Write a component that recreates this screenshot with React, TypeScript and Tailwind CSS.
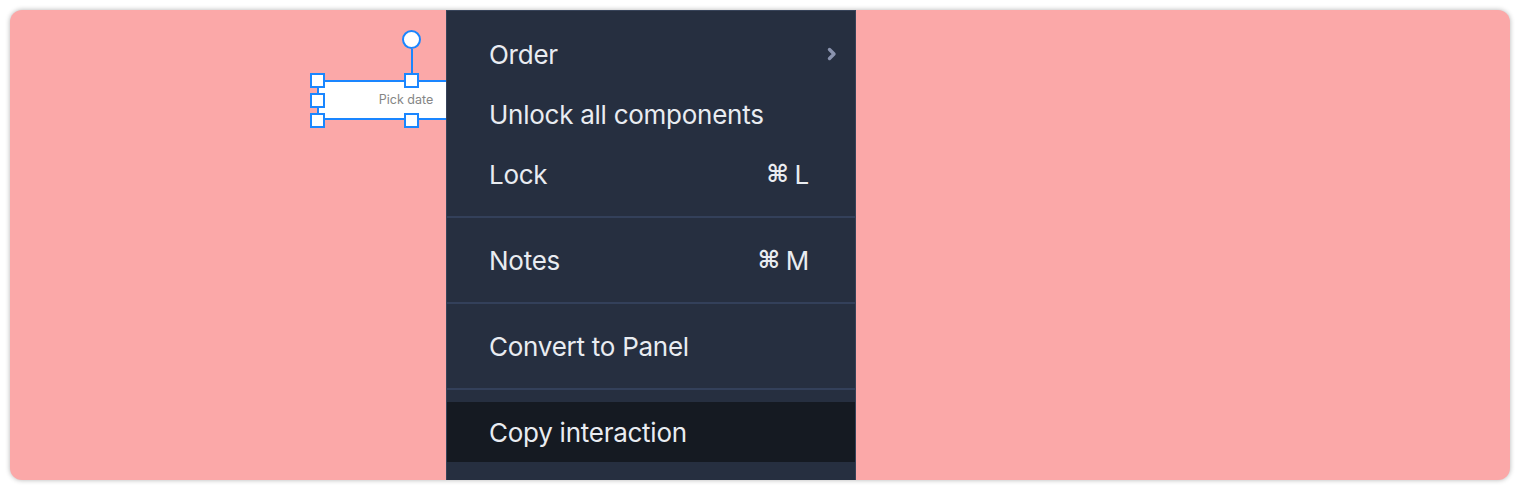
import { ReactNode } from "react";

const Handle = ({ className }: { className: string }) => (
  <div className={`absolute w-[15px] h-[15px] bg-white border-2 border-[#1a86ff] ${className}`} />
);

const Item = ({ label, right, active }: { label: string; right?: ReactNode; active?: boolean }) => (
  <div
    className={`h-[60px] flex items-center justify-between pl-[42px] pr-[46px] ${
      active ? "bg-[#151a22]" : ""
    }`}
  >
    <span>{label}</span>
    {right}
  </div>
);

const Shortcut = ({ k }: { k: string }) => (
  <span className="flex items-center gap-[6px]">
    <span className="font-['DejaVu_Sans'] font-bold text-[24px] leading-none">⌘</span>
    <span>{k}</span>
  </span>
);

const Divider = () => <div className="h-[2px] bg-[#33405a]" />;

const App = () => {
  return (
    <div className="w-[1520px] h-[490px] bg-white p-[10px]">
      <div className="relative w-full h-full rounded-[12px] bg-[#fba8a8] overflow-hidden shadow-[0_0_5px_rgba(0,0,0,0.3)]">
        {/* selected date picker on canvas */}
        <div className="absolute left-[307px] top-[29px]">
          <div className="absolute left-[85px] top-[-9px] w-[19px] h-[19px] rounded-full bg-white border-2 border-[#1a86ff]" />
          <div className="absolute left-[93.5px] top-[10px] w-[2px] h-[24px] bg-[#1a86ff]" />
          <div className="absolute left-[0px] top-[41px] w-[190px] h-[40px] bg-white border-2 border-[#1a86ff] flex items-center justify-center pl-[8px] pr-[20px]">
            <span className="font-['Inter'] text-[12.5px] text-[#858585]">Pick date</span>
          </div>
          <Handle className="left-[-7px] top-[34px]" />
          <Handle className="left-[-7px] top-[54px]" />
          <Handle className="left-[-7px] top-[74px]" />
          <Handle className="left-[87px] top-[34px]" />
          <Handle className="left-[87px] top-[74px]" />
        </div>

        {/* context menu */}
        <div className="absolute left-[436px] top-0 w-[410px] h-[520px] bg-[#262f40] border border-[#374359] font-['Inter'] text-[26px] tracking-[-0.01em] text-[#e9ecf1]">
          <div className="pt-[13px] pb-[12px]">
            <Item
              label="Order"
              right={
                <svg width="12" height="16" viewBox="0 0 12 16" className="mr-[-29px]">
                  <path d="M3.5 3.5 L8 8 L3.5 12.5" fill="none" stroke="#8a93ae" strokeWidth="3.4" strokeLinecap="round" strokeLinejoin="round" />
                </svg>
              }
            />
            <Item label="Unlock all components" />
            <Item label="Lock" right={<Shortcut k="L" />} />
          </div>
          <Divider />
          <div className="py-[12px]">
            <Item label="Notes" right={<Shortcut k="M" />} />
          </div>
          <Divider />
          <div className="py-[12px]">
            <Item label="Convert to Panel" />
          </div>
          <Divider />
          <div className="py-[12px]">
            <Item label="Copy interaction" active />
          </div>
        </div>
      </div>
    </div>
  );
};

export default App;
